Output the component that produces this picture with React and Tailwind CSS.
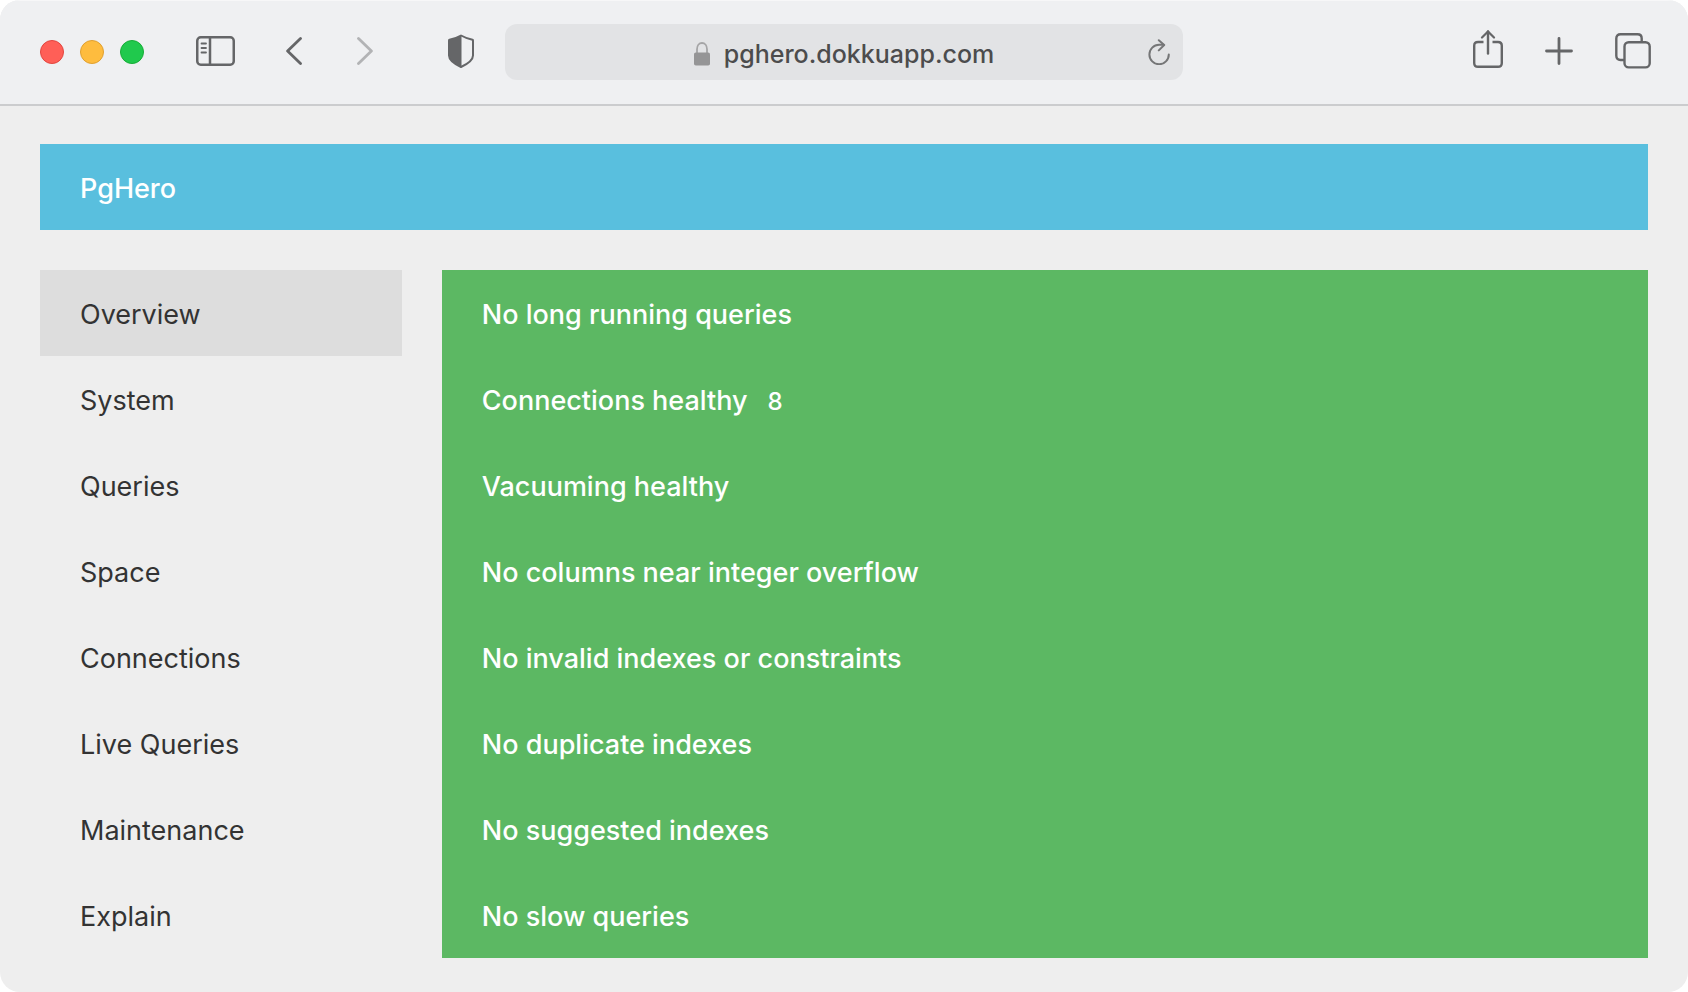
import React, { useState } from 'react';

const navItems = [
    'Overview',
    'System',
    'Queries',
    'Space',
    'Connections',
    'Live Queries',
    'Maintenance',
    'Explain',
    'Tune',
];

const checks = [
    { text: 'No long running queries' },
    { text: 'Connections healthy', count: 8 },
    { text: 'Vacuuming healthy' },
    { text: 'No columns near integer overflow' },
    { text: 'No invalid indexes or constraints' },
    { text: 'No duplicate indexes' },
    { text: 'No suggested indexes' },
    { text: 'No slow queries' },
];

const SidebarIcon = () => (
    <svg width="39" height="30" viewBox="0 0 39 30" fill="none" stroke="currentColor">
        <rect x="1.25" y="1.25" width="36.5" height="27.5" rx="3.5" strokeWidth="2.5" />
        <path d="M14 1.5v27" strokeWidth="2.5" />
        <path d="M5.5 7.5h4.5M5.5 12h4.5M5.5 16.5h4.5" strokeWidth="1.8" strokeLinecap="round" />
    </svg>
);

const BackIcon = () => (
    <svg width="16" height="28" viewBox="0 0 16 28" fill="none" stroke="currentColor" strokeWidth="2.8" strokeLinecap="round" strokeLinejoin="round">
        <path d="M14.5 1.5 1.6 14l12.9 12.5" />
    </svg>
);

const ForwardIcon = () => (
    <svg width="16" height="28" viewBox="0 0 16 28" fill="none" stroke="currentColor" strokeWidth="2.8" strokeLinecap="round" strokeLinejoin="round">
        <path d="M1.5 1.5 14.4 14 1.5 26.5" />
    </svg>
);

const ShieldIcon = () => (
    <svg width="28" height="34" viewBox="0 0 28 34" fill="none" stroke="currentColor" strokeWidth="2" strokeLinejoin="round">
        <path d="M14 1.5c3.5 2 7.5 3.3 11.5 4.2.4.1.5.3.5.7v15.1c0 4.5-5.5 8.5-12 11.5-6.5-3-12-7-12-11.5V6.4c0-.4.1-.6.5-.7C6.5 4.8 10.5 3.5 14 1.5Z" />
        <path d="M14.5 1.5v31.5c-7-3-12.5-7-12.5-11.5V6.4c0-.4.1-.6.5-.7C6.5 4.8 10.5 3.5 14.5 1.5Z" fill="currentColor" stroke="none" />
    </svg>
);

const LockIcon = () => (
    <svg width="16" height="24" viewBox="0 0 16 24" fill="none">
        <path d="M3 12V7.2C3 3.5 5 1 8 1s5 2.5 5 6.2V12" stroke="#a5a5a6" strokeWidth="1.8" />
        <rect x="0" y="10.5" width="16" height="13" rx="1.8" fill="#959596" />
    </svg>
);

const ReloadIcon = () => (
    <svg width="22" height="26" viewBox="0 0 22 26" fill="none" stroke="currentColor" strokeWidth="2" strokeLinecap="round" strokeLinejoin="round">
        <path d="M20.8 15.5A9.7 9.7 0 1 1 11.1 5.8H15.5" />
        <path d="M10.8 1.2 16.2 6 10.8 11.4" />
    </svg>
);

const ShareIcon = () => (
    <svg width="30" height="38" viewBox="0 0 30 38" fill="none" stroke="currentColor" strokeWidth="2.4" strokeLinecap="round" strokeLinejoin="round">
        <path d="M10.5 12H5c-2.4 0-3.8 1.4-3.8 3.8v17.2c0 2.4 1.4 3.8 3.8 3.8h20c2.4 0 3.8-1.4 3.8-3.8V15.8c0-2.4-1.4-3.8-3.8-3.8h-5.5" strokeLinecap="butt" />
        <path d="M15 23.5V1.5" />
        <path d="M9 7.5l6-6 6 6" strokeWidth="2.2" />
    </svg>
);

const PlusIcon = () => (
    <svg width="28" height="28" viewBox="0 0 28 28" fill="none" stroke="currentColor" strokeWidth="2.8" strokeLinecap="round">
        <path d="M14 1.5v25M1.5 14h25" />
    </svg>
);

const TabsIcon = () => (
    <svg width="36" height="36" viewBox="0 0 36 36" fill="none" stroke="currentColor" strokeWidth="2.4">
        <path d="M9.5 27H5.5c-2.6 0-4.2-1.6-4.2-4.2V5.5c0-2.6 1.6-4.2 4.2-4.2h17c2.6 0 4.2 1.6 4.2 4.2v3.5" />
        <rect x="9.5" y="9.2" width="25.2" height="25.2" rx="4.2" />
    </svg>
);

const Toolbar = () => {
    const [url, setUrl] = useState('pghero.dokkuapp.com');

    return (
        <header className="grid grid-cols-[1fr_minmax(0,678px)_1fr] items-start h-[106px] shrink-0 bg-[#eff0f2] border-t border-t-[#f7f7f8] border-b-2 border-b-[#cbccce] text-[#656668]">
            {/* Left: window buttons and history */}
            <div className="flex items-center h-[100px] pl-10">
                <div className="flex gap-4 pt-[2px]">
                    <button aria-label="Close" className="size-6 rounded-full bg-[#ff5f57] border border-[#e2463f]" />
                    <button aria-label="Minimize" className="size-6 rounded-full bg-[#febc3e] border border-[#e0a030]" />
                    <button aria-label="Zoom" className="size-6 rounded-full bg-[#20c94d] border border-[#17ad37]" />
                </div>
                <button aria-label="Show sidebar" className="ml-[52px]"><SidebarIcon /></button>
                <button aria-label="Back" className="ml-[51px]"><BackIcon /></button>
                <button aria-label="Forward" className="ml-[55px] text-[#b2b3b5]"><ForwardIcon /></button>
                <button aria-label="Privacy report" className="ml-[74px]"><ShieldIcon /></button>
            </div>

            {/* Center: address bar */}
            <div className="grid grid-cols-[1fr_auto_1fr] items-center h-14 mt-[23px] px-[13px] rounded-xl bg-[#e2e3e5]">
                <label htmlFor="address" aria-label="Address" className="col-start-2 flex items-center gap-[14px] pt-1">
                    <LockIcon />
                    <input
                        id="address"
                        type="text"
                        value={url}
                        onChange={(e) => setUrl(e.target.value)}
                        className="field-sizing-content bg-transparent outline-none text-[25px] leading-8 font-[450] text-[#4c4c4d]"
                    />
                </label>
                <button aria-label="Reload" className="justify-self-end text-[#757677]"><ReloadIcon /></button>
            </div>

            {/* Right: actions */}
            <div className="flex items-center justify-end h-[100px] pr-[37px]">
                <button aria-label="Share" className="mb-1"><ShareIcon /></button>
                <button aria-label="New tab" className="ml-[42px]"><PlusIcon /></button>
                <button aria-label="Tab overview" className="ml-[42px]"><TabsIcon /></button>
            </div>
        </header>
    );
};

const App = () => {
    const [active, setActive] = useState('Overview');

    return (
        <div className="bg-white">
            <div className="flex flex-col h-screen overflow-hidden rounded-[20px] bg-[#eeeeee] font-['Inter',sans-serif]">
                <Toolbar />

                <div className="px-10 pt-[38px] text-[27px] leading-[38px]">
                    <h1 className="px-10 pt-[26px] pb-[22px] bg-[#59bfde] font-[450] text-white">PgHero</h1>

                    <div className="flex items-start gap-10 mt-10">
                        <nav className="w-[22.5%] shrink-0">
                            <ul>
                                {navItems.map((item) => (
                                    <li key={item}>
                                        <a
                                            href="#"
                                            onClick={() => setActive(item)}
                                            className={`block px-10 pt-[26px] pb-[22px] text-[#333333] ${active === item ? 'bg-[#dddddd]' : ''}`}
                                        >
                                            {item}
                                        </a>
                                    </li>
                                ))}
                            </ul>
                        </nav>

                        <main className="flex-1 bg-[#5cb863] font-[450] text-white">
                            {checks.map((check) => (
                                <div key={check.text} className="flex items-baseline gap-5 px-10 pt-[26px] pb-[22px]">
                                    {check.text}
                                    {check.count && <span className="text-2xl leading-none">{check.count}</span>}
                                </div>
                            ))}
                        </main>
                    </div>
                </div>
            </div>
        </div>
    );
};

export default App;
